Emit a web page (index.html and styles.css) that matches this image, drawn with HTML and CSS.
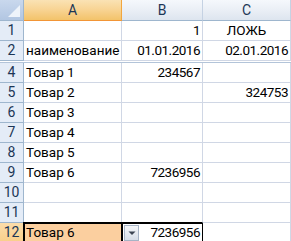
FILE: index.html
```html
<!DOCTYPE html>
<html lang="ru">
<head>
  <meta charset="UTF-8">
  <title>Лист1</title>
  <link rel="stylesheet" href="styles.css">
</head>
<body>

  <div class="sheet">
    <!-- column headers -->
    <div class="corner"><span class="corner-tri"></span></div>
    <div class="col-head active">A</div>
    <div class="col-head">B</div>
    <div class="col-head">C</div>

    <div class="row-head">1</div>
    <div class="cell"></div>
    <div class="cell num">1</div>
    <div class="cell center">ЛОЖЬ</div>

    <div class="row-head">2</div>
    <div class="cell">наименование</div>
    <div class="cell num">01.01.2016</div>
    <div class="cell num">02.01.2016</div>

    <!-- row 3 is hidden -->
    <div class="hidden-row"></div>
    <div class="hidden-row"></div>
    <div class="hidden-row"></div>
    <div class="hidden-row"></div>

    <div class="row-head">4</div>
    <div class="cell">Товар 1</div>
    <div class="cell num">234567</div>
    <div class="cell"></div>

    <div class="row-head">5</div>
    <div class="cell">Товар 2</div>
    <div class="cell"></div>
    <div class="cell num">324753</div>

    <div class="row-head">6</div>
    <div class="cell">Товар 3</div>
    <div class="cell"></div>
    <div class="cell"></div>

    <div class="row-head">7</div>
    <div class="cell">Товар 4</div>
    <div class="cell"></div>
    <div class="cell"></div>

    <div class="row-head">8</div>
    <div class="cell">Товар 5</div>
    <div class="cell"></div>
    <div class="cell"></div>

    <div class="row-head">9</div>
    <div class="cell">Товар 6</div>
    <div class="cell num">7236956</div>
    <div class="cell"></div>

    <div class="row-head">10</div>
    <div class="cell"></div>
    <div class="cell"></div>
    <div class="cell"></div>

    <div class="row-head">11</div>
    <div class="cell edge"></div>
    <div class="cell edge"></div>
    <div class="cell"></div>

    <div class="row-head active">12</div>
    <div class="cell selected">
      Товар 6
      <span class="dropdown">
        <svg width="8" height="6" viewBox="0 0 8 6"><path d="M0.5 1.5h7L4 5z" fill="#3b4452"/></svg>
      </span>
    </div>
    <div class="cell num boxed">7236956</div>
    <div class="cell"></div>
  </div>

</body>
</html>
```

FILE: styles.css
```css
body {
  margin: 0;
  background: #fff;
  overflow: hidden;
}
.sheet {
  display: grid;
  grid-template-columns: 24px 98px 81px 88px;
  grid-template-rows: 21px 20px 20px 2px repeat(9, 20px);
  font-family: Roboto, "Noto Sans", sans-serif;
  font-size: 13.5px;
  color: #000;
}
.sheet > div {
  box-sizing: border-box;
}
.corner {
  position: relative;
  background: linear-gradient(#c9d8ed, #b2c6e2);
  border-right: 1px solid #9eb6ce;
  border-bottom: 1px solid #9eb6ce;
}
.corner-tri {
  position: absolute;
  right: 3px;
  bottom: 3px;
  width: 0;
  height: 0;
  border-left: 12px solid transparent;
  border-bottom: 12px solid #eef3fa;
}
.col-head {
  background: linear-gradient(#f5f8fc 0%, #e9eef5 55%, #dde5ef 100%);
  border-right: 1px solid #c5d2e3;
  border-bottom: 1px solid #9eb6ce;
  color: #1c3656;
  font-size: 14px;
  text-align: center;
  line-height: 20px;
}
.col-head.active {
  background: linear-gradient(#fae2b4 0%, #f8d392 50%, #f3c36a 100%);
  border-right-color: #f2a63e;
  border-bottom-color: #f29536;
}
.row-head {
  background: #e4ecf7;
  border-right: 1px solid #9eb6ce;
  border-bottom: 1px solid #9eb6ce;
  color: #1c3656;
  font-size: 14px;
  text-align: center;
  line-height: 19px;
}
.row-head.active {
  background: linear-gradient(#fbdcaa, #f9cf8a);
  border-bottom-color: #f2a63e;
}
.hidden-row {
  border-bottom: 1px solid #b3c4d9;
}
.hidden-row:first-child {
  background: #e4ecf7;
}
.cell {
  border-right: 1px solid #d0d7e5;
  border-bottom: 1px solid #d0d7e5;
  padding: 0 2px;
  line-height: 19px;
  white-space: nowrap;
}
.num {
  text-align: right;
  letter-spacing: -0.5px;
}
.center {
  text-align: center;
}
.cell.edge {
  border-bottom-color: #000;
}
.selected {
  position: relative;
  background: #fbcf9f;
  outline: 2px solid #000;
  outline-offset: -1px;
}
.boxed {
  border-right-color: #000;
  box-shadow: inset 0 1px 0 #000;
}
.dropdown {
  position: absolute;
  left: 100px;
  top: 2px;
  width: 13px;
  height: 14px;
  border: 1px solid #a7b4c6;
  background: linear-gradient(#f4f6f9, #d7dee8);
  display: flex;
  align-items: center;
  justify-content: center;
}
```
